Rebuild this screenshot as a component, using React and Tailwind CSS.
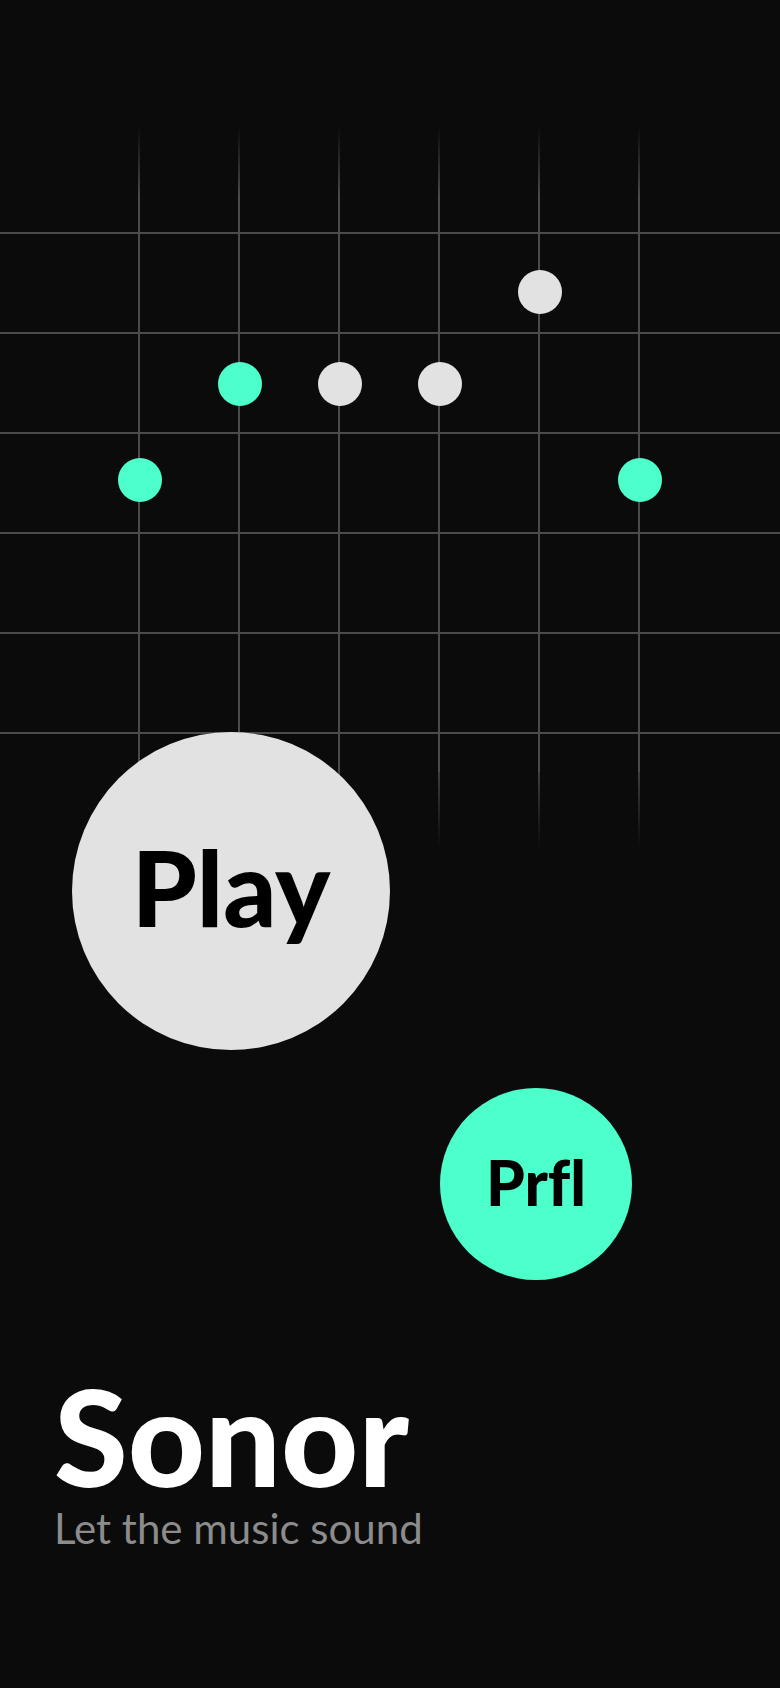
const rows = [0, 1, 2, 3, 4, 5];

const steps = [
  { id: 1, dot: "mt-[333px] bg-[#4dffca]" },
  { id: 2, dot: "mt-[237px] bg-[#4dffca]" },
  { id: 3, dot: "mt-[237px] bg-[#e2e2e2]" },
  { id: 4, dot: "mt-[237px] bg-[#e2e2e2]" },
  { id: 5, dot: "mt-[145px] bg-[#e2e2e2]" },
  { id: 6, dot: "mt-[333px] bg-[#4dffca]" },
];

function Step({ dot }) {
  return (
    <div className="grid h-full w-[100px]">
      <div className="col-start-1 row-start-1 flex w-1/2 flex-col items-end">
        <span className="h-[72px] w-0.5 bg-linear-to-b from-[#0b0b0b] to-[#4b4b4b]" />
        <span className="w-0.5 flex-1 bg-[#4b4b4b]" />
        <span className="h-[76px] w-0.5 bg-linear-to-b from-[#3f3f3f] to-[#0b0b0b]" />
      </div>
      <span className={`z-10 col-start-1 row-start-1 size-11 justify-self-center rounded-full ${dot}`} />
    </div>
  );
}

export default function App() {
  return (
    <main className="flex min-h-screen flex-col overflow-hidden bg-[#0b0b0b] font-['Lato','Open_Sans',sans-serif]">
      <section aria-hidden="true" className="grid pt-[125px]">
        <div className="col-start-1 row-start-1 pt-[107px]">
          {rows.map((row) => (
            <div key={row} className="h-[100px] border-t-2 border-[#4b4b4b]" />
          ))}
        </div>
        <div className="col-start-1 row-start-1 flex h-[723px] justify-center">
          {steps.map((step) => (
            <Step key={step.id} dot={step.dot} />
          ))}
        </div>
      </section>

      <nav className="-mt-[116px] flex flex-col">
        <button
          type="button"
          className="z-10 ml-[72px] flex size-[318px] items-center justify-center rounded-full bg-[#e2e2e2] pb-2 text-[104px] leading-none font-black text-black"
        >
          Play
        </button>
        <button
          type="button"
          className="mt-[38px] mr-[148px] flex size-48 items-center justify-center self-end rounded-full bg-[#4dffca] pb-1 text-[62px] leading-none font-black text-black [font-variant-ligatures:none]"
        >
          Prfl
        </button>
      </nav>

      <header className="mt-auto px-[54px] pt-12 pb-[136px]">
        <h1 className="text-[134px] leading-[128px] font-black text-white">Sonor</h1>
        <p className="mt-1 text-[42px] leading-[48px] text-[#8c8c8c]">Let the music sound</p>
      </header>
    </main>
  );
}
